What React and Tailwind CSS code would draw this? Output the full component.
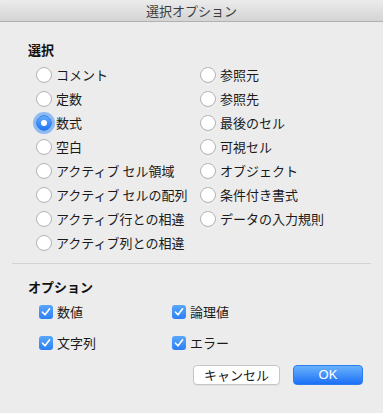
import React from "react";

const font = { fontFamily: '"Noto Sans CJK JP", "Noto Sans", sans-serif' };

function Radio({ label, checked }) {
  return (
    <div className="flex h-[24px] items-center">
      {checked ? (
        <span className="flex h-[16px] w-[16px] items-center justify-center rounded-full border border-[#2f7fe8] bg-gradient-to-b from-[#67abfa] to-[#1d74f5] shadow-[0_0_0_3px_rgba(110,170,245,0.75)]">
          <span className="h-[6px] w-[6px] rounded-full bg-white" />
        </span>
      ) : (
        <span className="h-[16px] w-[16px] rounded-full border border-[#b4b4b4] bg-white shadow-[inset_0_-1px_1px_rgba(0,0,0,0.04)]" />
      )}
      <span className="ml-[4px] text-[13px] leading-[16px] text-[#1a1a1a]">{label}</span>
    </div>
  );
}

function Check({ label }) {
  return (
    <div className="flex items-center">
      <span className="flex h-[14px] w-[14px] items-center justify-center rounded-[3px] bg-gradient-to-b from-[#5aa6fb] to-[#2a7ff5]">
        <svg width="14" height="14" viewBox="0 0 14 14">
          <polyline points="3.5,7.2 6,9.8 10.6,3.8" fill="none" stroke="white" strokeWidth="1.6" strokeLinecap="round" strokeLinejoin="round" />
        </svg>
      </span>
      <span className="ml-[4px] text-[13px] leading-[16px] text-[#1a1a1a]">{label}</span>
    </div>
  );
}

export default function App() {
  const left = ["コメント", "定数", "数式", "空白", "アクティブ セル領域", "アクティブ セルの配列", "アクティブ行との相違", "アクティブ列との相違"];
  const right = ["参照元", "参照先", "最後のセル", "可視セル", "オブジェクト", "条件付き書式", "データの入力規則"];
  return (
    <div className="flex h-[413px] w-[383px] flex-col bg-[#ececec]" style={font}>
      <div className="flex h-[22px] items-center justify-center rounded-t-[5px] border-b border-[#b1b1b1] bg-gradient-to-b from-[#ebebeb] to-[#d4d4d4]">
        <span className="text-[13px] leading-[16px] text-[#3c3c3c]">選択オプション</span>
      </div>

      <div className="mt-[20px] pl-[28px] text-[13px] font-bold leading-[16px] text-[#111]">選択</div>

      <div className="mt-[5px] grid grid-cols-[164px_1fr] pl-[36px]">
        <div className="flex flex-col">
          {left.map((l, i) => (
            <Radio key={l} label={l} checked={i === 2} />
          ))}
        </div>
        <div className="flex flex-col">
          {right.map((l) => (
            <Radio key={l} label={l} />
          ))}
        </div>
      </div>

      <div className="mx-[12px] mt-[8px] h-px bg-[#d3d3d3]" />

      <div className="mt-[15px] pl-[28px] text-[13px] font-bold leading-[16px] text-[#111]">オプション</div>

      <div className="mt-[9px] grid grid-cols-[133px_1fr] gap-y-[15px] pl-[39px]">
        <Check label="数値" />
        <Check label="論理値" />
        <Check label="文字列" />
        <Check label="エラー" />
      </div>

      <div className="mt-[14px] flex justify-end gap-[13px] pr-[20px]">
        <button className="flex h-[20px] w-[87px] items-center justify-center rounded-[4px] border border-[#c6c6c6] bg-white text-[13px] leading-[16px] text-[#1a1a1a] shadow-[0_1px_0_rgba(0,0,0,0.05)]">
          キャンセル
        </button>
        <button
          className="flex h-[20px] w-[70px] items-center justify-center rounded-[4px] border border-[#2a7cf0] bg-gradient-to-b from-[#69b1fb] to-[#1a6ff6] text-[13px] leading-[16px] text-white"
          style={{ fontFamily: '"Liberation Sans", Arial, sans-serif' }}
        >
          OK
        </button>
      </div>
    </div>
  );
}
